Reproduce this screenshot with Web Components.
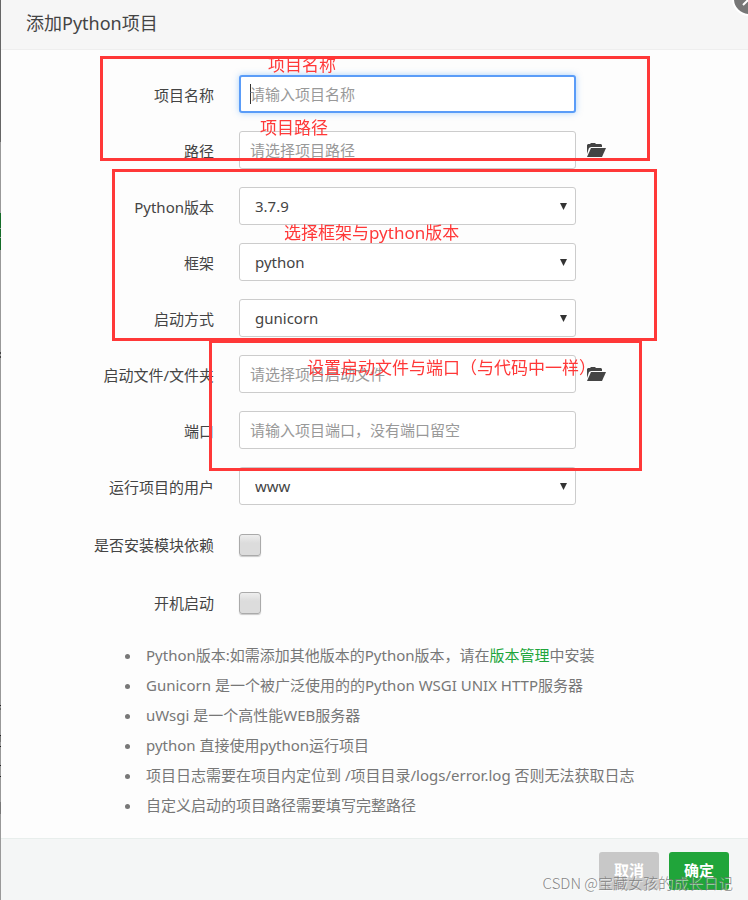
<!DOCTYPE html>
<html lang="zh-CN">
<head>
<meta charset="utf-8">
<meta name="viewport" content="width=device-width, initial-scale=1">
<title>添加Python项目</title>
<style>
  body {
    margin: 0;
    min-height: 100vh;
    display: flex;
    font-family: "Noto Sans", "Noto Sans CJK SC", sans-serif;
    font-size: 15px;
    color: #444;
    background: #fdfdfd;
    overflow-x: hidden;
  }
</style>
</head>
<body>

<page-edge></page-edge>
<project-dialog heading="添加Python项目">
  <text-field label="项目名称" hint="请输入项目名称" focused></text-field>
  <text-field label="路径" hint="请选择项目路径" folder></text-field>
  <select-field label="Python版本" value="3.7.9"></select-field>
  <select-field label="框架" value="python"></select-field>
  <select-field label="启动方式" value="gunicorn"></select-field>
  <text-field label="启动文件/文件夹" hint="请选择项目启动文件" folder></text-field>
  <text-field label="端口" hint="请输入项目端口，没有端口留空"></text-field>
  <select-field label="运行项目的用户" value="www"></select-field>
  <check-field label="是否安装模块依赖"></check-field>
  <check-field label="开机启动"></check-field>

  <help-notes slot="notes"></help-notes>

  <action-button slot="actions" kind="cancel">取消</action-button>
  <action-button slot="actions" kind="ok">确定</action-button>

  <mark-box slot="marks" style="--x: 99px; --y: 56px; --w: 550px; --h: 105px; --tx: 165px; --ty: -6px">项目名称</mark-box>
  <mark-box slot="marks" bare style="--x: 99px; --y: 56px; --w: 550px; --h: 105px; --tx: 157px; --ty: 57px">项目路径</mark-box>
  <mark-box slot="marks" style="--x: 111px; --y: 169px; --w: 545px; --h: 172px; --tx: 169px; --ty: 49px">选择框架与python版本</mark-box>
  <mark-box slot="marks" style="--x: 208px; --y: 340px; --w: 433px; --h: 131px; --tx: 95px; --ty: 13px">设置启动文件与端口（与代码中一样）</mark-box>
  <water-mark slot="marks">CSDN @宝藏女孩的成长日记</water-mark>
</project-dialog>

<script>
// Shared by every labelled row
const rowStyle = `
  :host {
    display: grid;
    grid-template-columns: 213px minmax(0, 337px) auto;
    column-gap: 25px;
    justify-content: start;
    height: 42px;
    margin-bottom: 14px;
  }
  * { box-sizing: border-box; }
  label {
    text-align: right;
    line-height: 40px;
    white-space: nowrap;
  }
  input, select {
    width: 100%;
    height: 38px;
    margin: 0;
    border: 1px solid #ccc;
    border-radius: 3px;
    background: #fff;
    font: inherit;
    color: inherit;
    outline: none;
  }
`;

class PageEdge extends HTMLElement {
  constructor() {
    super();
    this.attachShadow({ mode: 'open' }).innerHTML = `
      <style>
        /* Sliver of the dimmed page to the left of the dialog */
        :host {
          flex: 0 0 1px;
          background: linear-gradient(#666 0 142px, #999 142px 213px, #146c28 213px 228px,
            #999 228px 229px, #146c28 229px 237px, #999 237px 238px, #146c28 238px 250px,
            #999 250px 352px, #444 352px 354px, #999 354px 356px, #444 356px 358px,
            #999 358px 705px, #222 705px 706px, #999 706px 708px, #666 708px 710px,
            #999 710px 735px, #222 735px 736px, #777 736px 742px, #999 742px 746px,
            #222 746px 747px, #999 747px 765px, #222 765px 766px, #999 766px 776px,
            #222 776px 777px, #999 777px 802px, #777 802px 814px, #999 814px);
        }
      </style>
    `;
  }
}

class ProjectDialog extends HTMLElement {
  constructor() {
    super();
    this.attachShadow({ mode: 'open' }).innerHTML = `
      <style>
        :host {
          position: relative;
          flex: 1;
          min-width: 0;
          display: flex;
          flex-direction: column;
        }
        header {
          box-sizing: border-box;
          height: 50px;
          padding-left: 25px;
          border-bottom: 1px solid #eee;
          background: #f6f6f6;
        }
        h1 {
          margin: 0;
          font-size: 18px;
          font-weight: 400;
          line-height: 46px;
          color: #444;
        }
        .close {
          position: absolute;
          top: -18px;
          right: -18px;
          width: 34px;
          height: 34px;
          padding: 0;
          border: 2px solid #fff;
          border-radius: 50%;
          background: #777;
        }
        .close svg { display: block; width: 30px; height: 30px; }
        form { flex: 1; padding-top: 25px; }
        footer {
          display: flex;
          justify-content: flex-end;
          gap: 10px;
          padding: 13px 19px 10px;
          border-top: 1px solid #e8eeec;
          background: #f4f6f6;
        }
      </style>
      <header><h1></h1></header>
      <button class="close" type="button" aria-label="关闭">
        <svg viewBox="0 0 30 30"><path d="M9 9l12 12M21 9L9 21" stroke="#fff" stroke-width="2"/></svg>
      </button>
      <form>
        <slot></slot>
        <slot name="notes"></slot>
      </form>
      <footer><slot name="actions"></slot></footer>
      <slot name="marks"></slot>
    `;
  }

  connectedCallback() {
    this.shadowRoot.querySelector('h1').textContent = this.getAttribute('heading');
  }
}

class TextField extends HTMLElement {
  constructor() {
    super();
    this.attachShadow({ mode: 'open' }).innerHTML = `
      <style>
        ${rowStyle}
        :host { column-gap: 0; grid-template-columns: 213px 25px minmax(0, 337px) auto; }
        label { grid-column: 1; }
        input { grid-column: 3; padding: 0 10px; }
        input::placeholder { color: #999; opacity: 1; }
        :host([focused]) input {
          border: 2px solid #5a9cf8;
          padding: 0 9px;
          background: linear-gradient(#333, #333) 9px center / 1px 20px no-repeat #fff;
          caret-color: transparent;
          box-shadow: 0 0 6px rgba(90, 170, 250, 0.5);
        }
        .folder {
          grid-column: 4;
          width: 20px;
          height: 38px;
          margin-left: 10px;
          padding: 0;
          border: 0;
          background: none;
        }
        .folder svg { display: block; width: 20px; height: 16px; }
        :host(:not([folder])) .folder { display: none; }
      </style>
      <label for="field"></label>
      <input id="field" type="text">
      <button class="folder" type="button" aria-label="选择">
        <svg viewBox="0 0 20 16" fill="#444">
          <path d="M1 12V3l1-1h2l1-1h4l1 1h5l1 1v2H5L3 6z"/>
          <path d="M5 6h15l-4 9H1z"/>
        </svg>
      </button>
    `;
  }

  connectedCallback() {
    const input = this.shadowRoot.querySelector('input');
    this.shadowRoot.querySelector('label').textContent = this.getAttribute('label');
    input.placeholder = this.getAttribute('hint');
    if (this.hasAttribute('focused')) input.focus();
  }
}

class SelectField extends HTMLElement {
  constructor() {
    super();
    this.attachShadow({ mode: 'open' }).innerHTML = `
      <style>
        ${rowStyle}
        .wrap { display: grid; align-items: center; height: 38px; }
        select { grid-area: 1 / 1; appearance: none; padding: 0 28px 0 15px; }
        svg {
          grid-area: 1 / 1;
          justify-self: end;
          width: 7px;
          height: 7px;
          margin-right: 9px;
          pointer-events: none;
        }
      </style>
      <label for="field"></label>
      <div class="wrap">
        <select id="field"><option></option></select>
        <svg viewBox="0 0 7 7"><path d="M0 0h7L3.500 7z" fill="#333"/></svg>
      </div>
    `;
  }

  connectedCallback() {
    this.shadowRoot.querySelector('label').textContent = this.getAttribute('label');
    this.shadowRoot.querySelector('option').textContent = this.getAttribute('value');
  }
}

class CheckField extends HTMLElement {
  constructor() {
    super();
    this.attachShadow({ mode: 'open' }).innerHTML = `
      <style>
        ${rowStyle}
        :host { height: 44px; align-items: center; }
        input {
          appearance: none;
          width: 22px;
          height: 22px;
          border: 1px solid #aaa;
          background: linear-gradient(#eee, #dcdcdc 40%);
          box-shadow: 0 1px 1px rgba(0, 0, 0, 0.2);
        }
      </style>
      <label for="field"></label>
      <input id="field" type="checkbox">
    `;
  }

  connectedCallback() {
    this.shadowRoot.querySelector('label').textContent = this.getAttribute('label');
  }
}

class HelpNotes extends HTMLElement {
  constructor() {
    super();
    this.attachShadow({ mode: 'open' }).innerHTML = `
      <style>
        :host { display: block; padding: 1px 20px 18px 141px; color: #777; }
        ul { margin: 0; padding: 0; }
        li { padding-left: 4px; line-height: 30px; }
        a { color: #20a53a; text-decoration: none; }
      </style>
      <ul>
        <li>Python版本:如需添加其他版本的Python版本，请在<a href="#">版本管理</a>中安装</li>
        <li>Gunicorn 是一个被广泛使用的的Python WSGI UNIX HTTP服务器</li>
        <li>uWsgi 是一个高性能WEB服务器</li>
        <li>python 直接使用python运行项目</li>
        <li>项目日志需要在项目内定位到 /项目目录/logs/error.log 否则无法获取日志</li>
        <li>自定义启动的项目路径需要填写完整路径</li>
      </ul>
    `;
  }
}

class ActionButton extends HTMLElement {
  constructor() {
    super();
    this.attachShadow({ mode: 'open' }).innerHTML = `
      <style>
        :host { display: block; }
        button {
          display: block;
          width: 60px;
          height: 38px;
          padding: 0 0 4px;
          border: 0;
          border-radius: 3px;
          font: inherit;
          font-weight: 700;
          color: #fff;
          background: #c8c8c8;
        }
        :host([kind="ok"]) button { background: #20a53a; }
      </style>
      <button type="button"><slot></slot></button>
    `;
  }
}

// Red annotation frame with a caption placed relative to the frame
class MarkBox extends HTMLElement {
  constructor() {
    super();
    this.attachShadow({ mode: 'open' }).innerHTML = `
      <style>
        :host {
          position: absolute;
          left: var(--x);
          top: var(--y);
          box-sizing: border-box;
          width: var(--w);
          height: var(--h);
          border: 3px solid #ff3838;
          color: #ff3838;
          font-size: 17px;
          line-height: 24px;
          pointer-events: none;
        }
        :host([bare]) { border-color: transparent; }
        span {
          position: absolute;
          left: var(--tx);
          top: var(--ty);
          white-space: nowrap;
        }
      </style>
      <span><slot></slot></span>
    `;
  }
}

class WaterMark extends HTMLElement {
  constructor() {
    super();
    this.attachShadow({ mode: 'open' }).innerHTML = `
      <style>
        :host {
          position: absolute;
          right: 15px;
          bottom: 6px;
          font-family: "Noto Sans CJK SC", sans-serif;
          font-weight: 300;
          line-height: 22px;
          white-space: nowrap;
          color: rgba(120, 120, 120, 0.9);
          text-shadow: 1px 1px 0 rgba(255, 255, 255, 0.6);
          pointer-events: none;
        }
      </style>
      <slot></slot>
    `;
  }
}

customElements.define('page-edge', PageEdge);
customElements.define('project-dialog', ProjectDialog);
customElements.define('text-field', TextField);
customElements.define('select-field', SelectField);
customElements.define('check-field', CheckField);
customElements.define('help-notes', HelpNotes);
customElements.define('action-button', ActionButton);
customElements.define('mark-box', MarkBox);
customElements.define('water-mark', WaterMark);
</script>
</body>
</html>
